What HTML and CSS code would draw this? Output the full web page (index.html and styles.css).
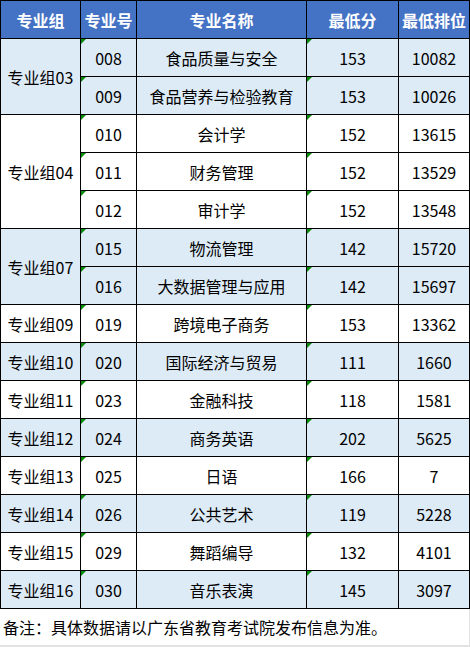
FILE: index.html
```html
<!DOCTYPE html>
<html lang="zh-CN">
<head>
    <meta charset="UTF-8">
    <title>专业组录取分数</title>
    <link rel="stylesheet" href="styles.css">
</head>
<body>
    <div class="sheet">
        <table class="scores">
            <colgroup>
                <col class="c-group">
                <col class="c-code">
                <col class="c-name">
                <col class="c-score">
                <col class="c-rank">
            </colgroup>
            <thead>
                <tr>
                    <th>专业组</th>
                    <th>专业号</th>
                    <th>专业名称</th>
                    <th>最低分</th>
                    <th>最低排位</th>
                </tr>
            </thead>
            <tbody>
                <tr class="blue">
                    <td rowspan="2">专业组03</td>
                    <td class="txt">008</td>
                    <td>食品质量与安全</td>
                    <td class="txt">153</td>
                    <td>10082</td>
                </tr>
                <tr class="blue">
                    <td class="txt">009</td>
                    <td>食品营养与检验教育</td>
                    <td class="txt">153</td>
                    <td>10026</td>
                </tr>
                <tr>
                    <td rowspan="3">专业组04</td>
                    <td class="txt">010</td>
                    <td>会计学</td>
                    <td class="txt">152</td>
                    <td>13615</td>
                </tr>
                <tr>
                    <td class="txt">011</td>
                    <td>财务管理</td>
                    <td class="txt">152</td>
                    <td>13529</td>
                </tr>
                <tr>
                    <td class="txt">012</td>
                    <td>审计学</td>
                    <td class="txt">152</td>
                    <td>13548</td>
                </tr>
                <tr class="blue">
                    <td rowspan="2">专业组07</td>
                    <td class="txt">015</td>
                    <td>物流管理</td>
                    <td class="txt">142</td>
                    <td>15720</td>
                </tr>
                <tr class="blue">
                    <td class="txt">016</td>
                    <td>大数据管理与应用</td>
                    <td class="txt">142</td>
                    <td>15697</td>
                </tr>
                <tr>
                    <td>专业组09</td>
                    <td class="txt">019</td>
                    <td>跨境电子商务</td>
                    <td class="txt">153</td>
                    <td>13362</td>
                </tr>
                <tr class="blue">
                    <td>专业组10</td>
                    <td class="txt">020</td>
                    <td>国际经济与贸易</td>
                    <td class="txt">111</td>
                    <td>1660</td>
                </tr>
                <tr>
                    <td>专业组11</td>
                    <td class="txt">023</td>
                    <td>金融科技</td>
                    <td class="txt">118</td>
                    <td>1581</td>
                </tr>
                <tr class="blue">
                    <td>专业组12</td>
                    <td class="txt">024</td>
                    <td>商务英语</td>
                    <td class="txt">202</td>
                    <td>5625</td>
                </tr>
                <tr>
                    <td>专业组13</td>
                    <td class="txt">025</td>
                    <td>日语</td>
                    <td class="txt">166</td>
                    <td>7</td>
                </tr>
                <tr class="blue">
                    <td>专业组14</td>
                    <td class="txt">026</td>
                    <td>公共艺术</td>
                    <td class="txt">119</td>
                    <td>5228</td>
                </tr>
                <tr>
                    <td>专业组15</td>
                    <td class="txt">029</td>
                    <td>舞蹈编导</td>
                    <td class="txt">132</td>
                    <td>4101</td>
                </tr>
                <tr class="blue">
                    <td>专业组16</td>
                    <td class="txt">030</td>
                    <td>音乐表演</td>
                    <td class="txt">145</td>
                    <td>3097</td>
                </tr>
            </tbody>
        </table>
        <div class="note">备注：具体数据请以广东省教育考试院发布信息为准。</div>
    </div>
</body>
</html>
```

FILE: styles.css
```css
* {
    box-sizing: border-box;
}
body {
    margin: 0;
    background: #ffffff;
    font-family: "Noto Sans CJK SC", "Noto Sans", sans-serif;
    color: #000;
}
.sheet {
    width: 470px;
    height: 647px;
    border-right: 1px solid #e2e2e2;
    border-bottom: 2px solid #e2e2e2;
}
.scores {
    width: 469px;
    border-collapse: collapse;
    table-layout: fixed;
}
.c-group { width: 80px; }
.c-code { width: 56px; }
.c-name { width: 170px; }
.c-score { width: 92px; }
.c-rank { width: 71px; }
.scores th,
.scores td {
    border: 1px solid #000;
    height: 38px;
    padding: 0;
    text-align: center;
    vertical-align: middle;
    font-size: 16px;
    line-height: 18px;
    white-space: nowrap;
}
.scores th {
    background: #4472c4;
    color: #fff;
    font-weight: bold;
    font-size: 16px;
}
.scores tr.blue td {
    background: #ddebf7;
}
/* excel "number stored as text" marker */
.scores td.txt {
    position: relative;
}
.scores td.txt::before {
    content: "";
    position: absolute;
    top: 0;
    left: 0;
    border-top: 5px solid #0a8a0a;
    border-right: 5px solid transparent;
}
.note {
    height: 37px;
    padding-left: 3px;
    font-size: 16px;
    line-height: 37px;
}
```
